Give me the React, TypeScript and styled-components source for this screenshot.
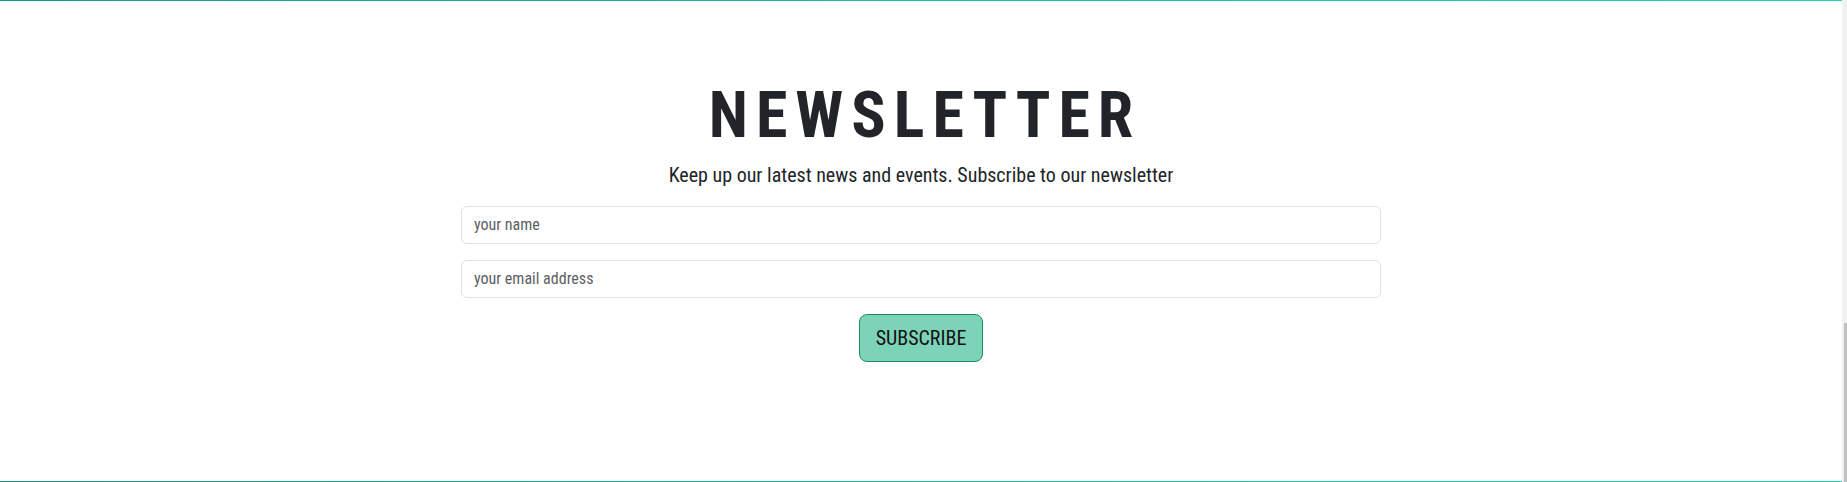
import React from "react";
import styled, { createGlobalStyle } from "styled-components";

const GlobalStyle = createGlobalStyle`
  html, body {
    margin: 0;
    padding: 0;
    background: #ffffff;
    overflow: hidden;
  }
  body {
    font-family: "Roboto Condensed", Roboto, "Liberation Sans", sans-serif;
    color: #212529;
  }
`;

const Page = styled.div`
  display: flex;
  width: 100%;
  height: 482px;
`;

const Section = styled.section`
  flex: 1;
  box-sizing: border-box;
  height: 100%;
  background:
    linear-gradient(90deg, #13998f, #1bbfa6 50%, #20d4b4) top / 100% 1px no-repeat,
    linear-gradient(90deg, #168c80, #1bbfa6 50%, #20d4b4) bottom / 100% 1px no-repeat,
    #ffffff;
  display: flex;
  flex-direction: column;
  align-items: center;
  padding-top: 78px;
`;

const Title = styled.h2`
  margin: 0 0 5px;
  font-size: 64px;
  line-height: 1.2;
  font-weight: 700;
  letter-spacing: 8px;
  padding-left: 8px;
  color: #212529;
`;

const Lead = styled.p`
  margin: 0 0 16px;
  font-size: 20px;
  line-height: 1.5;
  color: #212529;
`;

const Form = styled.form`
  width: 920px;
  display: flex;
  flex-direction: column;
  align-items: center;
  gap: 16px;
`;

const Field = styled.input`
  box-sizing: border-box;
  width: 100%;
  height: 38px;
  padding: 6px 12px;
  font-family: inherit;
  font-size: 16px;
  color: #495057;
  background: #ffffff;
  border: 1px solid #dee2e6;
  border-radius: 6px;
  outline: none;
  &::placeholder {
    color: #5c5f63;
  }
`;

const SubmitButton = styled.button`
  box-sizing: border-box;
  height: 48px;
  padding: 0 16px;
  font-family: inherit;
  font-size: 20px;
  color: #111111;
  background: #7dd3b8;
  border: 1px solid #1f8a5e;
  border-radius: 8px;
  cursor: pointer;
`;

const Scrollbar = styled.div`
  width: 5px;
  height: 100%;
  background: #f1f1f1;
  display: flex;
  flex-direction: column;
  justify-content: flex-end;
  align-items: flex-end;
`;

const Thumb = styled.div`
  width: 3px;
  height: 159px;
  background: #c1c1c1;
`;

export default function App() {
  return (
    <>
      <GlobalStyle />
      <Page>
        <Section>
          <Title>NEWSLETTER</Title>
          <Lead>Keep up our latest news and events. Subscribe to our newsletter</Lead>
          <Form onSubmit={(e) => e.preventDefault()}>
            <Field type="text" placeholder="your name" />
            <Field type="email" placeholder="your email address" />
            <SubmitButton type="submit">SUBSCRIBE</SubmitButton>
          </Form>
        </Section>
        <Scrollbar>
          <Thumb />
        </Scrollbar>
      </Page>
    </>
  );
}
